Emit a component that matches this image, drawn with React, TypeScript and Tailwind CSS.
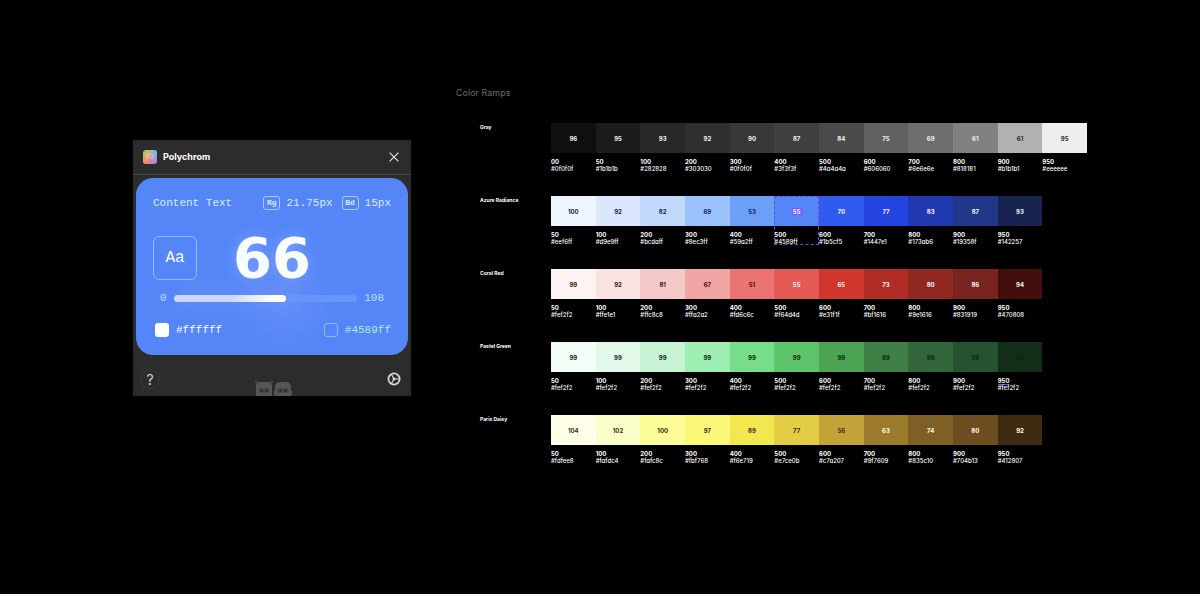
import { useState } from 'react';

interface Shade {
  name: string;
  hex: string;
  fill: string;
  score: number;
  dark?: boolean;
}

interface Ramp {
  title: string;
  ink: string;
  light: string;
  shades: Shade[];
}

// name, label hex, painted colour, contrast score, dark text
const shade = (name: string, hex: string, fill: string, score: number, dark = false): Shade => ({ name, hex, fill, score, dark });

const RAMPS: Ramp[] = [
  {
    title: 'Gray',
    ink: '#2a2a2a',
    light: '#f2f2f2',
    shades: [
      shade('00', '#0f0f0f', '#0f0f0f', 96),
      shade('50', '#1b1b1b', '#1b1b1b', 95),
      shade('100', '#282828', '#282828', 93),
      shade('200', '#303030', '#303030', 92),
      shade('300', '#0f0f0f', '#383838', 90),
      shade('400', '#3f3f3f', '#3f3f3f', 87),
      shade('500', '#4a4a4a', '#4a4a4a', 84),
      shade('600', '#606060', '#606060', 75),
      shade('700', '#6e6e6e', '#6e6e6e', 69),
      shade('800', '#818181', '#818181', 61),
      shade('900', '#b1b1b1', '#b1b1b1', 61, true),
      shade('950', '#eeeeee', '#eeeeee', 95, true),
    ],
  },
  {
    title: 'Azure Radiance',
    ink: '#18234f',
    light: '#eff6ff',
    shades: [
      shade('50', '#eef6ff', '#eff6ff', 100, true),
      shade('100', '#d9e9ff', '#dbe7fd', 92, true),
      shade('200', '#bcdaff', '#c2d8fb', 82, true),
      shade('300', '#8ec3ff', '#9bc2fb', 69, true),
      shade('400', '#59a2ff', '#6c9ff8', 53, true),
      shade('500', '#4589ff', '#5586f7', 55),
      shade('600', '#1b5cf5', '#305bee', 70),
      shade('700', '#1447e1', '#2344df', 77),
      shade('800', '#173ab6', '#2139b0', 83),
      shade('900', '#19358f', '#213889', 87),
      shade('950', '#142257', '#18234f', 93),
    ],
  },
  {
    title: 'Coral Red',
    ink: '#430f0c',
    light: '#fcf3f2',
    shades: [
      shade('50', '#fef2f2', '#fcf3f2', 99, true),
      shade('100', '#ffe1e1', '#f9e3e1', 92, true),
      shade('200', '#ffc8c8', '#f4c9c7', 81, true),
      shade('300', '#ffa2a2', '#f0a4a3', 67, true),
      shade('400', '#fd6c6c', '#eb7471', 51, true),
      shade('500', '#f64d4d', '#e45a54', 55),
      shade('600', '#e31f1f', '#d1362c', 65),
      shade('700', '#bf1616', '#b02c24', 73),
      shade('800', '#9e1616', '#902720', 80),
      shade('900', '#831919', '#782421', 86),
      shade('950', '#470808', '#430f0c', 94),
    ],
  },
  {
    title: 'Pastel Green',
    ink: '#0d2613',
    light: '#f2fdf6',
    shades: [
      shade('50', '#fef2f2', '#f2fdf6', 99, true),
      shade('100', '#fef2f2', '#e2f9e9', 99, true),
      shade('200', '#fef2f2', '#c5f3d3', 99, true),
      shade('300', '#fef2f2', '#9eedb1', 99, true),
      shade('400', '#fef2f2', '#78dd8a', 99, true),
      shade('500', '#fef2f2', '#5dc46c', 99, true),
      shade('600', '#fef2f2', '#4ca353', 99, true),
      shade('700', '#fef2f2', '#3e8045', 99, true),
      shade('800', '#fef2f2', '#31653a', 99, true),
      shade('900', '#fef2f2', '#27522f', 99, true),
      shade('950', '#fef2f2', '#132d19', 99, true),
    ],
  },
  {
    title: 'Paris Daisy',
    ink: '#3f2b12',
    light: '#fdffe8',
    shades: [
      shade('50', '#fdfee8', '#fdffe8', 104, true),
      shade('100', '#fafdc4', '#fbfec8', 102, true),
      shade('200', '#fafc8c', '#fafc97', 100, true),
      shade('300', '#fbf768', '#faf878', 97, true),
      shade('400', '#f6e719', '#f3e750', 89, true),
      shade('500', '#e7ce0b', '#e2cd44', 77, true),
      shade('600', '#c7a207', '#c3a338', 56, true),
      shade('700', '#9f7609', '#9c7a2b', 63),
      shade('800', '#835c10', '#7f5f24', 74),
      shade('900', '#704b13', '#6c4d20', 80),
      shade('950', '#412807', '#3f2b12', 92),
    ],
  },
];

const MAX = 108;

export default function App() {
  return (
    <div className="flex min-h-screen w-full items-start gap-[45px] bg-black pl-[133px] pr-[113px] font-['Inter',sans-serif] text-white">
      <Plugin />
      <main className="min-w-0 flex-1 pt-[86px]">
        <h1 className="text-[9px] leading-[14px] text-[#6b6b6b]">Color Ramps</h1>
        <div className="mt-[23px] flex flex-col gap-6 pl-6">
          {RAMPS.map(r => (
            <RampRow key={r.title} ramp={r} />
          ))}
        </div>
      </main>
    </div>
  );
}

function RampRow({ ramp }: { ramp: Ramp }) {
  return (
    <section className="flex text-[6px] leading-[7px]">
      <h2 className="w-[71px] shrink-0 text-[5px] font-bold leading-[9px]">{ramp.title}</h2>
      <ul className="grid flex-1 grid-cols-12">
        {ramp.shades.map(s => {
          const selected = s.hex === '#4589ff';
          const marked = ramp.title === 'Pastel Green' && s.name === '950';
          return (
            <li key={s.name} className="relative">
              <div
                className="flex h-[30px] items-center justify-center font-bold"
                style={{ background: s.fill, color: s.dark ? ramp.ink : ramp.light }}
              >
                <span className={selected ? 'bg-[#7b5cf0] px-px' : ''}>{s.score}</span>
              </div>
              <div className="mt-[5px] [font-feature-settings:'cv11']">
                <div className="font-bold">
                  <span className={marked ? 'border-b border-[#6a4fe0]' : ''}>{s.name}</span>
                </div>
                <div className="font-medium">{s.hex}</div>
              </div>
              {selected && <span className="absolute inset-0 border border-dashed border-[#7048e0]" />}
            </li>
          );
        })}
      </ul>
    </section>
  );
}

function Plugin() {
  const [value, setValue] = useState(66);

  return (
    <aside className="mt-[140px] w-[278px] shrink-0 overflow-hidden bg-[#2c2c2c]">
      <header className="flex h-[35px] items-center border-b border-[#474747] pl-2.5 pr-3">
        <Logo />
        <span className="ml-1.5 text-[9px] font-bold">Polychrom</span>
        <button aria-label="Close" className="ml-auto">
          <svg width="10" height="10" viewBox="0 0 10 10" fill="none" stroke="#e8e8e8" strokeWidth="1.1">
            <path d="M.6.6l8.8 8.8M9.4.6L.6 9.4" />
          </svg>
        </button>
      </header>

      <div className="mx-[3px] mt-[3px] h-[177px] rounded-[17px] bg-[#5586f7] bg-[radial-gradient(circle_at_55%_68%,#658ef9_0,#5586f7_48px)] px-[17px] pt-[18px] font-['Liberation_Mono',monospace] text-[11px] leading-[14px] text-[#d9ecff]">
        <div className="flex items-center justify-between">
          <span>Content Text</span>
          <div className="flex items-center gap-[9px]">
            <span className="flex items-center gap-1.5">
              <Weight>Rg</Weight>
              21.75px
            </span>
            <span className="flex items-center gap-1.5">
              <Weight>Bd</Weight>
              15px
            </span>
          </div>
        </div>

        <div className="mt-[26px] grid grid-cols-[44px_1fr_44px] items-center">
          <div className="flex h-11 items-center justify-center rounded-md border border-[#8fbcff] text-[16px] text-white">Aa</div>
          <output className="text-center font-['DejaVu_Sans',sans-serif] text-[56px] font-bold leading-[44px] text-[#f8fdff] [text-shadow:0_0_14px_#7f9ffb]">
            {value}
          </output>
        </div>

        <div className="mt-[11px] flex items-center gap-[7px] px-[7px]">
          <span className="text-[#b5e4ff]">0</span>
          <div className="relative h-[7px] flex-1 rounded-full bg-[#6795fa]">
            <div
              className="h-full rounded-full bg-linear-to-r from-[#c9d9fd] from-50% to-white to-90% shadow-[4px_0_18px_#7396f9]"
              style={{ width: `${(value / MAX) * 100}%` }}
            />
            <input
              type="range"
              aria-label="Contrast"
              min={0}
              max={MAX}
              value={value}
              onChange={e => setValue(Number(e.target.value))}
              className="absolute inset-0 h-full w-full appearance-none bg-transparent [&::-webkit-slider-thumb]:size-[7px] [&::-webkit-slider-thumb]:appearance-none"
            />
          </div>
          <span className="text-[#b5e4ff]">{MAX}</span>
        </div>

        <div className="mt-[18px] flex items-center justify-between pl-0.5">
          <span className="flex items-center gap-[7px] text-white">
            <span className="size-3.5 rounded-[3px] bg-white" />
            #ffffff
          </span>
          <span className="flex items-center gap-[7px] text-[#b5e4ff]">
            <span className="size-3.5 rounded-[3px] border border-[#8fbcff]" />
            #4589ff
          </span>
        </div>
      </div>

      <footer className="flex h-[41px] items-start justify-between px-[7px]">
        <button className="mt-3.5 flex size-5 items-center justify-center rounded-full border border-[#3b3b3b] text-[14px] text-[#d6d6d6]" aria-label="Help">
          ?
        </button>
        <svg className="mt-[26px]" width="38" height="15" viewBox="0 0 38 15" fill="#565656">
          <path d="M1 6V4a3 3 0 013-3h10a3 3 0 013 3v11H1z" />
          <path d="M0 0h2v1H0zM16 0h2v1h-2z" />
          <path d="M20 15V6a5 5 0 015-5h6a5 5 0 015 5v9z" />
          <path d="M19 10h2v4h-2zM35 10h2v4h-2z" />
          <g fill="#303030">
            <rect x="3" y="7" width="12" height="5" rx="2.5" fill="#494949" />
            <circle cx="6.5" cy="9.5" r="1.5" />
            <circle cx="11.5" cy="9.5" r="1.5" />
            <rect x="22" y="7" width="12" height="5" rx="2.5" fill="#494949" />
            <circle cx="25.5" cy="9.5" r="1.5" />
            <circle cx="30.5" cy="9.5" r="1.5" />
          </g>
        </svg>
        <button className="mt-[17px] mr-[3px]" aria-label="Settings">
          <svg width="14" height="14" viewBox="0 0 14 14" fill="none" stroke="#dcdcdc">
            <circle cx="7" cy="7" r="5.5" strokeWidth="1.5" />
            <circle cx="7" cy="7" r="6.4" strokeWidth=".5" strokeDasharray="1.4 1.1" />
            <circle cx="7" cy="7" r="1.4" fill="#dcdcdc" stroke="none" />
            <path d="M7 7h5.4M7 7L4.3 2.3M7 7l-2.7 4.7" strokeWidth="1.1" />
          </svg>
        </button>
      </footer>
    </aside>
  );
}

function Weight({ children }: { children: string }) {
  return (
    <span className="flex h-3.5 w-[17px] items-center justify-center rounded-[3px] border border-[#a9ccff] text-[8px] font-bold">
      {children}
    </span>
  );
}

function Logo() {
  return (
    <svg width="14" height="14" viewBox="0 0 14 14">
      <defs>
        <linearGradient id="warm" x1="0" y1="0" x2="1" y2="1">
          <stop offset="0" stopColor="#72d18b" />
          <stop offset=".3" stopColor="#e3b45d" />
          <stop offset=".6" stopColor="#e77fae" />
          <stop offset="1" stopColor="#7f8cf5" />
        </linearGradient>
        <radialGradient id="orange" cx="0" cy="1" r=".75">
          <stop offset="0" stopColor="#ff8a4c" />
          <stop offset="1" stopColor="#ff8a4c" stopOpacity="0" />
        </radialGradient>
        <radialGradient id="cyan" cx="1" cy=".2" r=".7">
          <stop offset="0" stopColor="#55c7f5" />
          <stop offset="1" stopColor="#55c7f5" stopOpacity="0" />
        </radialGradient>
      </defs>
      <rect width="14" height="14" rx="3" fill="url(#warm)" />
      <rect width="14" height="14" rx="3" fill="url(#orange)" />
      <rect width="14" height="14" rx="3" fill="url(#cyan)" />
      <path d="M3 6c2-2.5 6-2.5 8 0M4 5.5v4M4 7h3l2 2.5M10 5.5v4" fill="none" stroke="#fff" strokeOpacity=".45" strokeWidth=".8" />
    </svg>
  );
}
